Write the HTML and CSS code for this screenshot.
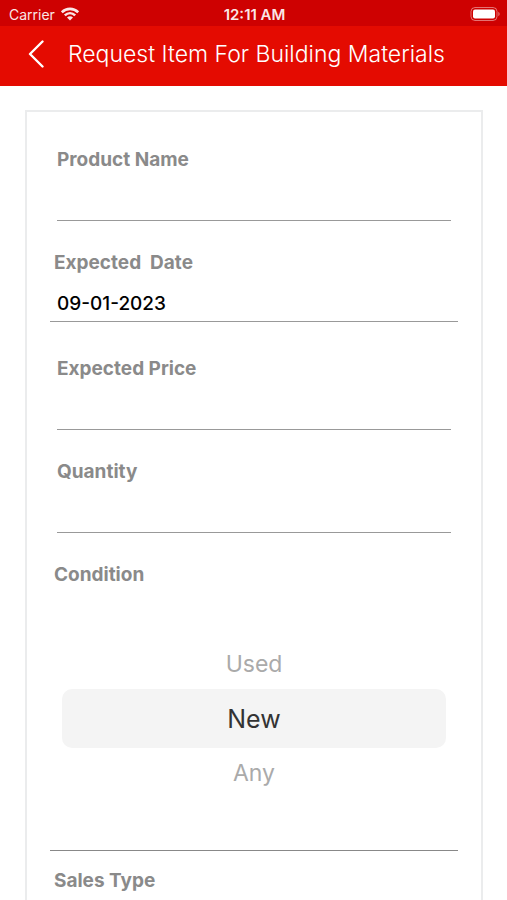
FILE: index.html
```html
<!DOCTYPE html>
<html lang="en">
<head>
    <meta charset="UTF-8">
    <meta name="viewport" content="width=device-width, initial-scale=1.0">
    <title>Request Item</title>
    <link rel="stylesheet" href="styles.css">
</head>
<body>
    <div class="status-bar">
        <div class="carrier">
            <span>Carrier</span>
            <svg width="18" height="14" viewBox="0 0 18 14" fill="none" stroke="#fff" stroke-width="2.6">
                <path d="M0.8 5.2C5.4 0.7 12.6 0.7 17.2 5.2"/>
                <path d="M3.8 8.4C6.9 5.5 11.1 5.5 14.2 8.4"/>
                <path d="M6 10.4C7.8 8.9 10.2 8.9 12 10.4L9 13.4Z" fill="#fff" stroke="none"/>
            </svg>
        </div>
        <span class="time">12:11 AM</span>
        <div class="battery">
            <svg width="30" height="14" viewBox="0 0 30 14">
                <rect x="1" y="0.5" width="26" height="13" rx="4" fill="none" stroke="#fff" stroke-opacity="0.45"/>
                <rect x="3" y="2.5" width="22" height="9" rx="2" fill="#fff"/>
                <path d="M28.4 4.8C30 5.6 30 8.4 28.4 9.2Z" fill="#fff" fill-opacity="0.5"/>
            </svg>
        </div>
    </div>
    <header>
        <button class="back" type="button" aria-label="Back">
            <svg width="16" height="28" viewBox="0 0 16 28" fill="none" stroke="#fff" stroke-width="2.4" stroke-linecap="round" stroke-linejoin="round">
                <path d="M14.5 1.5L2 14L14.5 26.5"/>
            </svg>
        </button>
        <h1>Request Item For Building Materials</h1>
    </header>

    <main>
        <form class="card">
            <div class="field">
                <label for="product">Product Name</label>
                <input type="text" id="product">
            </div>
            <div class="field wide date">
                <label for="date">Expected  Date</label>
                <input type="text" id="date" value="09-01-2023">
            </div>
            <div class="field">
                <label for="price">Expected Price</label>
                <input type="text" id="price">
            </div>
            <div class="field">
                <label for="quantity">Quantity</label>
                <input type="text" id="quantity">
            </div>

            <!-- Condition picker -->
            <fieldset class="field wide condition">
                <legend>Condition</legend>
                <div class="picker">
                    <label><input type="radio" name="condition" value="used">Used</label>
                    <label><input type="radio" name="condition" value="new" checked>New</label>
                    <label><input type="radio" name="condition" value="any">Any</label>
                </div>
            </fieldset>

            <div class="field wide sales">
                <span class="field-title">Sales Type</span>
            </div>
        </form>
    </main>
</body>
</html>
```

FILE: styles.css
```css
* {
    box-sizing: border-box;
}
body {
    font-family: Inter, "Liberation Sans", sans-serif;
    margin: 0;
    min-height: 100vh;
    background-color: #fff;
    color: #000;
    display: flex;
    flex-direction: column;
}

/* Status bar */
.status-bar {
    display: grid;
    grid-template-columns: 1fr auto 1fr;
    align-items: center;
    height: 26px;
    padding: 2px 7px 0 9px;
    background-color: #ce0101;
    color: #fff;
    font-size: 14px;
}
.carrier {
    display: flex;
    align-items: center;
    gap: 6px;
    opacity: 0.9;
}
.time {
    font-size: 15px;
    font-weight: 600;
    opacity: 0.9;
}
.battery {
    display: flex;
    justify-content: flex-end;
}

/* Header */
header {
    display: flex;
    align-items: center;
    gap: 16px;
    height: 60px;
    padding: 0 20px;
    padding-bottom: 5px;
    background-color: #e40b01;
    color: #fff;
}
header h1 {
    margin: 0;
    font-size: 23px;
    font-weight: 300;
    white-space: nowrap;
}
.back {
    display: flex;
    padding: 0 8px;
    border: none;
    background: none;
    cursor: pointer;
}

/* Form */
main {
    flex: 1;
    display: flex;
    padding: 24px 24px 0 25px;
}
.card {
    flex: 1;
    min-width: 0;
    padding: 36px 0 0;
    border: 2px solid #ebeced;
    border-bottom: none;
}
.field {
    display: flex;
    flex-direction: column;
    margin: 0 30px 30px;
}
.field label,
.field legend,
.field-title {
    padding: 0;
    font-size: 19px;
    font-weight: 700;
    line-height: 24px;
    color: #8a8a8a;
    white-space: pre;
}
.field input[type="text"] {
    width: 100%;
    height: 49px;
    padding: 0;
    border: none;
    border-bottom: 1px solid #999;
    border-radius: 0;
    background: none;
    font-family: inherit;
    font-size: 19px;
    font-weight: 500;
    color: #000;
    outline: none;
}
.wide {
    margin: 0 23px 30px;
}
.wide > label,
.wide > legend,
.wide > .field-title {
    padding-left: 4px;
}
.date {
    margin-bottom: 35px;
}
.field.date input {
    height: 47px;
    padding: 10px 7px 0;
}
.condition {
    min-width: 0;
    margin-bottom: 18px;
    padding: 0;
    border: none;
    border-bottom: 1px solid #888;
}
.sales {
    margin-bottom: 0;
}

/* Wheel picker */
.picker {
    padding: 52px 12px;
}
.field .picker label {
    display: flex;
    align-items: center;
    justify-content: center;
    height: 50px;
    border-radius: 10px;
    font-size: 23px;
    font-weight: 400;
    color: #aaa;
    cursor: pointer;
}
.picker input {
    appearance: none;
    width: 0;
    height: 0;
    margin: 0;
}
.field .picker label:has(input:checked) {
    height: 59px;
    background-color: #f4f4f4;
    font-size: 25px;
    color: #333;
}
```
